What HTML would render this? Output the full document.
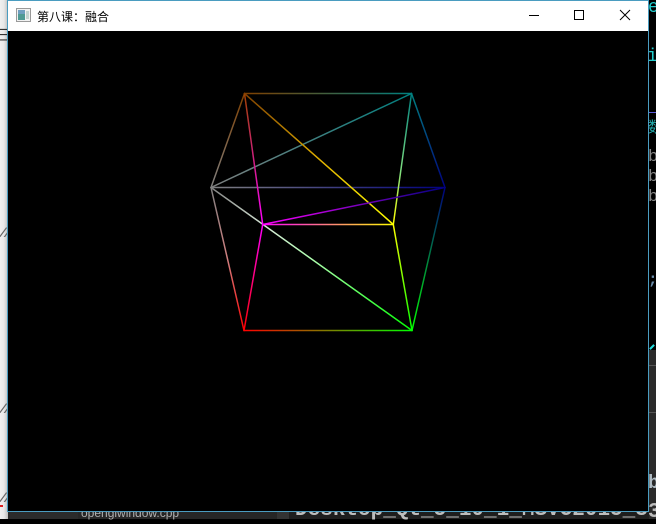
<!DOCTYPE html>
<html><head><meta charset="utf-8"><style>
html,body{margin:0;padding:0;background:#000}
body{width:656px;height:519px;position:relative;overflow:hidden;font-family:"Liberation Sans","Noto Sans CJK SC",sans-serif}
.a{position:absolute}
</style></head><body>
<div class="a" style="left:0;top:0;width:8px;height:519px;background:linear-gradient(90deg,#f0f0f0,#e8e8e8 50%,#bdbdbd)"></div>
<div class="a" style="left:-3px;top:26px;font:15px/18px 'Noto Sans CJK SC',sans-serif;color:#333">三</div>
<div class="a" style="left:-1px;top:226px;font:italic bold 13px 'Liberation Mono',monospace;color:#666;letter-spacing:-3px">//</div>
<div class="a" style="left:-1px;top:402px;font:italic bold 13px 'Liberation Mono',monospace;color:#666;letter-spacing:-3px">//</div>
<div class="a" style="left:-1px;top:491px;font:italic bold 13px 'Liberation Mono',monospace;color:#666;letter-spacing:-3px">//</div>
<div class="a" style="left:0;top:505px;width:3px;height:2px;background:#d22"></div>
<div class="a" style="left:8px;top:512px;width:70px;height:7px;background:#2b2b2b"></div>
<div class="a" style="left:78px;top:512px;width:200px;height:7px;background:#262626"></div>
<div class="a" style="left:277px;top:512px;width:12px;height:7px;background:#333"></div>
<div class="a" style="left:289px;top:512px;width:367px;height:7px;background:#1e1e1e"></div>
<div class="a" style="left:81px;top:505px;font-size:12px;line-height:16px;color:#b0b0b0;white-space:nowrap">openglwindow.cpp</div>
<div class="a" style="left:295px;top:498px;font:bold 21px/26px 'Liberation Mono',monospace;color:#bdbdbd;white-space:nowrap">Desktop_Qt_5_10_1_MSVC2015_3</div>
<div class="a" style="left:649px;top:0;width:7px;height:519px;overflow:hidden;background:#000">
 <div class="a" style="left:0;top:350px;width:7px;height:169px;background:#2a2a2a"></div>
 <div class="a" style="left:0;top:365px;width:7px;height:1px;background:#555"></div>
 <div class="a" style="left:0;top:412px;width:7px;height:1px;background:#555"></div>
 <div class="a" style="left:0;top:112px;width:7px;height:1px;background:#5a5ad8"></div>
 <div class="a" style="left:-1px;top:-2px;font:18px/20px 'Liberation Mono',monospace;color:#2cc">e</div>
 <div class="a" style="left:-2px;top:47px;font:18px/20px 'Liberation Mono',monospace;color:#2cc">i</div>
 <div class="a" style="left:-1px;top:117px;font:15px/20px 'Noto Sans CJK SC',sans-serif;color:#2aa">数</div>
 <div class="a" style="left:-1px;top:148px;font:17px/20px 'Liberation Mono',monospace;color:#888">b</div>
 <div class="a" style="left:-1px;top:168px;font:17px/20px 'Liberation Mono',monospace;color:#888">b</div>
 <div class="a" style="left:-1px;top:188px;font:17px/20px 'Liberation Mono',monospace;color:#888">b</div>
 <div class="a" style="left:-1px;top:270px;font:bold 16px/20px 'Liberation Mono',monospace;color:#6a8caa">;</div>
 <div class="a" style="left:0;top:346px;width:6px;height:2px;background:#2dd;transform:rotate(-45deg)"></div>
 <div class="a" style="left:-1px;top:472px;font:bold 19px/22px 'Liberation Mono',monospace;color:#b0bcc4">b</div>
 <div class="a" style="left:-1px;top:501px;font:bold 21px/24px 'Liberation Mono',monospace;color:#bdbdbd">3</div>
</div>
<div class="a" style="left:7px;top:0;width:640px;height:510px;border:1px solid #4a9cc0;background:#000">
 <div class="a" style="left:0;top:0;width:640px;height:30px;background:#fff"></div>
 <svg class="a" style="left:0;top:0" width="640" height="30" viewBox="8 1 640 30">
  <rect x="16.5" y="8.5" width="14" height="13" fill="#f2f2f2" stroke="#9a9a9a"/>
  <rect x="18" y="10" width="7" height="10" fill="#4f9a94"/>
  <rect x="18" y="10" width="7" height="4" fill="#6f9fc0"/>
  <rect x="26" y="11" width="3" height="8" fill="#c4d4d0"/>
  <rect x="529" y="15" width="10" height="1" fill="#000"/>
  <rect x="574.5" y="10.5" width="9" height="9" fill="none" stroke="#000"/>
  <path d="M620 10L630 20M630 10L620 20" stroke="#000" stroke-width="1" fill="none"/>
 </svg>
 <div class="a" style="left:29px;top:7px;font:12px/17px 'Noto Sans CJK SC',sans-serif;color:#000;white-space:nowrap">第八课：融合</div>
</div>
<svg class="a" style="left:0;top:0" width="656" height="519" viewBox="0 0 656 519">
 <defs>
  <linearGradient id="ab" gradientUnits="userSpaceOnUse" x1="244.5" y1="0" x2="411.5" y2="0"><stop offset="0" stop-color="#804000"/><stop offset="1" stop-color="#008080"/></linearGradient>
  <linearGradient id="ac" gradientUnits="userSpaceOnUse" x1="244.5" y1="93.5" x2="211" y2="187.5"><stop offset="0" stop-color="#804000"/><stop offset="1" stop-color="#808080"/></linearGradient>
  <linearGradient id="ae" gradientUnits="userSpaceOnUse" x1="244.5" y1="93.5" x2="262.7" y2="224.5"><stop offset="0" stop-color="#a04000"/><stop offset="1" stop-color="#ff00ff"/></linearGradient>
  <linearGradient id="af" gradientUnits="userSpaceOnUse" x1="244.5" y1="93.5" x2="393.3" y2="224.5"><stop offset="0" stop-color="#804000"/><stop offset=".5" stop-color="#e0b000"/><stop offset="1" stop-color="#ffff00"/></linearGradient>
  <linearGradient id="bc" gradientUnits="userSpaceOnUse" x1="411.5" y1="93.5" x2="211" y2="187.5"><stop offset="0" stop-color="#008080"/><stop offset="1" stop-color="#808080"/></linearGradient>
  <linearGradient id="bd" gradientUnits="userSpaceOnUse" x1="411.5" y1="93.5" x2="445" y2="187.5"><stop offset="0" stop-color="#008080"/><stop offset="1" stop-color="#000080"/></linearGradient>
  <linearGradient id="bf" gradientUnits="userSpaceOnUse" x1="411.5" y1="93.5" x2="393.3" y2="224.5"><stop offset="0" stop-color="#008080"/><stop offset=".6" stop-color="#80e080"/><stop offset="1" stop-color="#ffff00"/></linearGradient>
  <linearGradient id="cd" gradientUnits="userSpaceOnUse" x1="211" y1="0" x2="445" y2="0"><stop offset="0" stop-color="#808080"/><stop offset="1" stop-color="#000080"/></linearGradient>
  <linearGradient id="cg" gradientUnits="userSpaceOnUse" x1="211" y1="187.5" x2="244" y2="330.5"><stop offset="0" stop-color="#808080"/><stop offset=".5" stop-color="#d08080"/><stop offset="1" stop-color="#ff0000"/></linearGradient>
  <linearGradient id="ch" gradientUnits="userSpaceOnUse" x1="211" y1="187.5" x2="412" y2="330.5"><stop offset="0" stop-color="#808080"/><stop offset=".27" stop-color="#d8e8d8"/><stop offset=".5" stop-color="#b0ffb0"/><stop offset="1" stop-color="#00ff00"/></linearGradient>
  <linearGradient id="eg" gradientUnits="userSpaceOnUse" x1="262.7" y1="224.5" x2="244" y2="330.5"><stop offset="0" stop-color="#ff00ff"/><stop offset="1" stop-color="#ff0000"/></linearGradient>
  <linearGradient id="ef" gradientUnits="userSpaceOnUse" x1="262.7" y1="0" x2="393.3" y2="0"><stop offset="0" stop-color="#ff00ff"/><stop offset="1" stop-color="#ffff00"/></linearGradient>
  <linearGradient id="ed" gradientUnits="userSpaceOnUse" x1="262.7" y1="224.5" x2="445" y2="187.5"><stop offset="0" stop-color="#ff00ff"/><stop offset="1" stop-color="#000080"/></linearGradient>
  <linearGradient id="dh" gradientUnits="userSpaceOnUse" x1="445" y1="187.5" x2="412" y2="330.5"><stop offset="0" stop-color="#000080"/><stop offset="1" stop-color="#00ff00"/></linearGradient>
  <linearGradient id="fh" gradientUnits="userSpaceOnUse" x1="393.3" y1="224.5" x2="412" y2="330.5"><stop offset="0" stop-color="#ffff00"/><stop offset="1" stop-color="#00ff00"/></linearGradient>
  <linearGradient id="gh" gradientUnits="userSpaceOnUse" x1="244" y1="0" x2="412" y2="0"><stop offset="0" stop-color="#ff0000"/><stop offset="1" stop-color="#00ff00"/></linearGradient>
 </defs>
 <g stroke-width="1.5" fill="none" stroke-linecap="round">
  <path d="M211 187.5H445" stroke="url(#cd)" stroke-width="1.4"/>
  <path d="M211 187.5L411.5 93.5" stroke="url(#bc)"/>
  <path d="M244.5 93.5L211 187.5" stroke="url(#ac)"/>
  <path d="M211 187.5L244 330.5" stroke="url(#cg)"/>
  <path d="M211 187.5L412 330.5" stroke="url(#ch)"/>
  <path d="M411.5 93.5L445 187.5" stroke="url(#bd)"/>
  <path d="M445 187.5L412 330.5" stroke="url(#dh)"/>
  <path d="M244.5 93.5L393.3 224.5" stroke="url(#af)"/>
  <path d="M411.5 93.5L393.3 224.5" stroke="url(#bf)"/>
  <path d="M393.3 224.5L412 330.5" stroke="url(#fh)"/>
  <path d="M244.5 93.5L262.7 224.5" stroke="url(#ae)"/>
  <path d="M262.7 224.5L244 330.5" stroke="url(#eg)"/>
  <path d="M262.7 224.5L445 187.5" stroke="url(#ed)"/>
  <path d="M262.7 224.5H393.3" stroke="url(#ef)" stroke-width="1.4"/>
  <path d="M244.5 93.5H411.5" stroke="url(#ab)" stroke-width="1.4"/>
  <path d="M244 330.5H412" stroke="url(#gh)" stroke-width="1.4"/>
 </g>
</svg>
</body></html>
